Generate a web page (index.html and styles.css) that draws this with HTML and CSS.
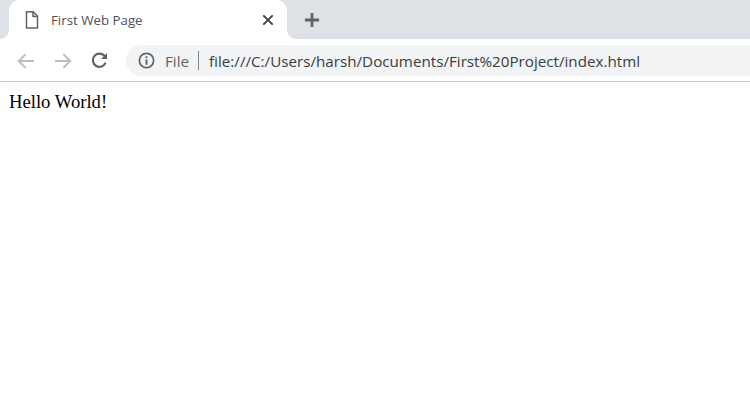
FILE: index.html
```html
<!DOCTYPE html>
<html lang="en">
<head>
<meta charset="utf-8">
<title>First Web Page</title>
<link rel="stylesheet" href="styles.css">
</head>
<body>
<div class="browser">
  <div class="tabstrip">
    <div class="strip-left"></div>
    <div class="tab-slot">
      <div class="tab">
        <svg class="doc-icon" width="16" height="20" viewBox="0 0 16 20" fill="none" stroke="#5f6368" stroke-width="1.5" stroke-linejoin="round"><path d="M2.5 1.8h6.8l4.2 4.4v11.9h-11z"/><path d="M9 1.8v4.6h4.5"/></svg>
        <span class="tab-title">First Web Page</span>
        <svg class="tab-close" width="12" height="12" viewBox="0 0 12 12" stroke="#3c4043" stroke-width="1.9"><path d="M1.3 1.3l9.4 9.4M10.7 1.3l-9.4 9.4"/></svg>
      </div>
    </div>
    <div class="strip-right">
      <svg class="new-tab" width="16" height="16" viewBox="0 0 16 16" stroke="#5f6368" stroke-width="2.8"><path d="M8 1v14M1 8h14"/></svg>
    </div>
  </div>
  <div class="toolbar">
    <div class="nav">
      <svg width="18" height="16" viewBox="0 0 18 16" fill="none" stroke="#b9bcc0" stroke-width="1.9"><path d="M17 8H2M8.6 1.2L1.8 8l6.8 6.8"/></svg>
      <svg width="18" height="16" viewBox="0 0 18 16" fill="none" stroke="#b9bcc0" stroke-width="1.9"><path d="M1 8h15M9.4 1.2L16.2 8l-6.8 6.8"/></svg>
      <svg width="17" height="17" viewBox="0 0 17 17" fill="none" stroke="#5f6368" stroke-width="2.2"><path d="M14.6 10.7A6.6 6.6 0 1 1 13.2 3.6L15 5.4"/><path d="M16 1v6h-6" fill="#5f6368" stroke="none"/></svg>
    </div>
    <div class="omnibox">
      <svg class="info" width="17" height="17" viewBox="0 0 16 16" fill="none" stroke="#5f6368" stroke-width="1.6"><circle cx="8" cy="8" r="6.7"/><path d="M8 7v5" stroke-width="1.8"/><path d="M8 4v1.7" stroke-width="1.8"/></svg>
      <span class="scheme">File</span>
      <span class="divider"></span>
      <span class="url">file:///C:/Users/harsh/Documents/First%20Project/index.html</span>
    </div>
  </div>
  <main class="content">Hello World!</main>
</div>
</body>
</html>
```
FILE: styles.css
```css
* { box-sizing: border-box; }
html, body { margin: 0; padding: 0; height: 100%; background: #fff; overflow: hidden; }
.browser { display: flex; flex-direction: column; height: 416px; width: 750px; }
.tabstrip { display: flex; height: 39px; background: #fff; }
.strip-left { width: 9px; background: #dee1e5; border-bottom-right-radius: 9px; }
.tab-slot { width: 278px; background: #dee1e5; }
.tab { display: flex; align-items: center; height: 39px; background: #fff; border-radius: 11px 11px 0 0; padding: 0 13px 0 15px; }
.doc-icon { flex: none; }
.tab-title { margin-left: 11px; font: 13.3px/20px "Open Sans", sans-serif; color: #4d5156; flex: 1; }
.strip-right { flex: 1; display: flex; align-items: center; background: #dee1e5; border-bottom-left-radius: 9px; padding-left: 17px; }
.toolbar { display: flex; height: 42px; padding-top: 6px; padding-bottom: 5px; }
.nav { display: flex; align-items: center; width: 126px; padding-left: 17px; gap: 19px; }
.omnibox { flex: 1; display: flex; align-items: center; background: #f1f3f4; border-radius: 16px 0 0 16px; padding-left: 12px; }
.info { flex: none; }
.scheme { margin-left: 10px; font: 15.2px/20px "Open Sans", sans-serif; color: #5f6368; }
.divider { width: 1px; height: 19px; background: #80868b; margin: 0 10px 0 9px; }
.url { font: 15.2px/20px "Open Sans", sans-serif; color: #3a3d41; white-space: nowrap; }
.content { flex: 1; border-top: 1px solid #c6c7c8; padding: 9px 9px; font: 18.67px/22px "Liberation Serif", "Times New Roman", serif; color: #000; }
```
